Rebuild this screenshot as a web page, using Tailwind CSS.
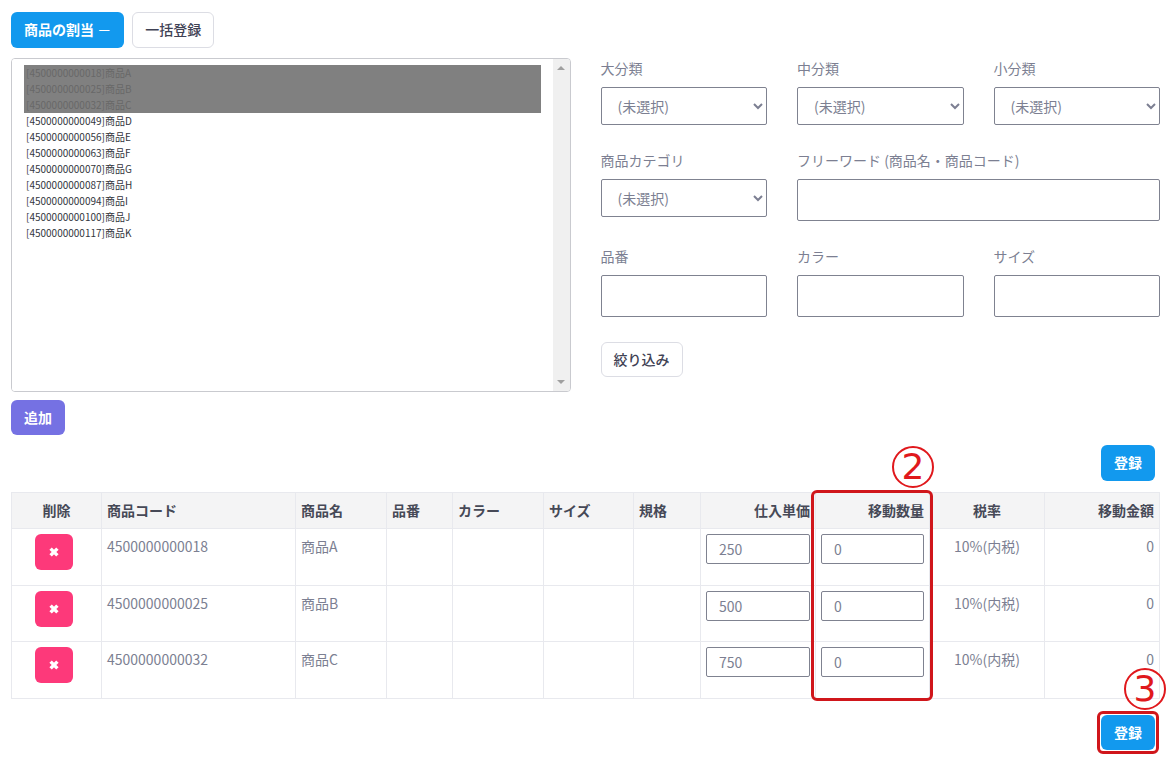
<!DOCTYPE html>
<html lang="ja">
<head>
<meta charset="utf-8">
<meta name="viewport" content="width=device-width, initial-scale=1">
<title>商品の割当</title>
<script src="https://cdn.jsdelivr.net/npm/@tailwindcss/browser@4"></script>
</head>
<body class="bg-white font-['Noto_Sans_CJK_JP',sans-serif] text-sm text-[#7c7f92]">
<main class="pt-3 pr-2 pb-2 pl-[11px]">
  <div class="flex gap-2">
    <button type="button" class="h-9 rounded-md bg-[#1299ee] px-[13px] pb-0.5 text-[14px] leading-5 font-bold text-white">商品の割当 <span class="font-normal">－</span></button>
    <button type="button" class="h-9 rounded-md border border-[#dcdde4] px-3 pb-0.5 text-[14px] leading-5 font-medium text-[#3f4254]">一括登録</button>
  </div>

  <div class="mt-2.5 grid grid-cols-2 gap-[30px]">
    <div>
      <div class="flex h-[334px] overflow-hidden rounded-[4px] border border-[#c9cacf]">
        <select multiple aria-label="商品一覧" class="h-full min-w-0 flex-1 overflow-hidden bg-white px-3 py-1.5 text-[10px] text-[#33363d]">
          <option disabled class="h-4 bg-[#808080] px-0.5 leading-4 text-[#686868]">[4500000000018]商品A</option>
          <option disabled class="h-4 bg-[#808080] px-0.5 leading-4 text-[#686868]">[4500000000025]商品B</option>
          <option disabled class="h-4 bg-[#808080] px-0.5 leading-4 text-[#686868]">[4500000000032]商品C</option>
          <option class="h-4 px-0.5 leading-4">[4500000000049]商品D</option>
          <option class="h-4 px-0.5 leading-4">[4500000000056]商品E</option>
          <option class="h-4 px-0.5 leading-4">[4500000000063]商品F</option>
          <option class="h-4 px-0.5 leading-4">[4500000000070]商品G</option>
          <option class="h-4 px-0.5 leading-4">[4500000000087]商品H</option>
          <option class="h-4 px-0.5 leading-4">[4500000000094]商品I</option>
          <option class="h-4 px-0.5 leading-4">[4500000000100]商品J</option>
          <option class="h-4 px-0.5 leading-4">[4500000000117]商品K</option>
        </select>
        <div aria-hidden="true" class="flex w-[17px] flex-col items-center justify-between bg-[#f0f0f0] py-[7px]">
          <svg class="h-1 w-2" viewBox="0 0 8 4"><path d="M0 4L4 0L8 4Z" fill="#a0a0a0"/></svg>
          <svg class="h-1 w-2" viewBox="0 0 8 4"><path d="M0 0L4 4L8 0Z" fill="#a0a0a0"/></svg>
        </div>
      </div>
      <button type="button" class="mt-2 h-[35px] rounded-md bg-[#7571e3] px-[13px] pb-0.5 text-[14px] leading-5 font-bold text-white">追加</button>
    </div>

    <form class="grid grid-cols-3 content-start gap-x-[30px] gap-y-[25px]">
      <div class="flex flex-col gap-2">
        <label for="large" class="leading-[21px]">大分類</label>
        <select id="large" class="h-[38px] rounded-[2px] border border-[#7f8290] bg-white pr-px pl-3"><option>(未選択)</option></select>
      </div>
      <div class="flex flex-col gap-2">
        <label for="middle" class="leading-[21px]">中分類</label>
        <select id="middle" class="h-[38px] rounded-[2px] border border-[#7f8290] bg-white pr-px pl-3"><option>(未選択)</option></select>
      </div>
      <div class="flex flex-col gap-2">
        <label for="small" class="leading-[21px]">小分類</label>
        <select id="small" class="h-[38px] rounded-[2px] border border-[#7f8290] bg-white pr-px pl-3"><option>(未選択)</option></select>
      </div>
      <div class="flex flex-col gap-2">
        <label for="category" class="leading-[21px]">商品カテゴリ</label>
        <select id="category" class="h-[38px] rounded-[2px] border border-[#7f8290] bg-white pr-px pl-3"><option>(未選択)</option></select>
      </div>
      <div class="col-span-2 flex flex-col gap-2">
        <label for="freeword" class="leading-[21px]">フリーワード (商品名・商品コード)</label>
        <input id="freeword" type="text" class="h-[42px] rounded-[2px] border border-[#7f8290] px-3">
      </div>
      <div class="flex flex-col gap-2">
        <label for="number" class="leading-[21px]">品番</label>
        <input id="number" type="text" class="h-[42px] w-full rounded-[2px] border border-[#7f8290] px-3">
      </div>
      <div class="flex flex-col gap-2">
        <label for="color" class="leading-[21px]">カラー</label>
        <input id="color" type="text" class="h-[42px] w-full rounded-[2px] border border-[#7f8290] px-3">
      </div>
      <div class="flex flex-col gap-2">
        <label for="size" class="leading-[21px]">サイズ</label>
        <input id="size" type="text" class="h-[42px] w-full rounded-[2px] border border-[#7f8290] px-3">
      </div>
      <div class="col-span-3">
        <button type="button" class="h-[35px] rounded-md border border-[#dcdde4] px-3 pb-0.5 text-[14px] leading-5 font-medium text-[#3f4254]">絞り込み</button>
      </div>
    </form>
  </div>

  <div class="mt-2.5 flex justify-end pr-[5px]">
    <button type="button" class="h-9 rounded-md bg-[#1299ee] px-[13px] pb-0.5 text-[14px] leading-5 font-bold text-white">登録</button>
  </div>

  <div class="relative mt-[11px] pr-px">
    <table class="w-full table-fixed border-collapse text-left [&_td]:border [&_td]:border-[#e8e9ee] [&_td]:px-[5px] [&_td]:align-top [&_th]:border [&_th]:border-[#e8e9ee] [&_th]:px-[5px] [&_th]:pb-0.5">
      <colgroup>
        <col class="w-[90px]"><col class="w-[194px]"><col class="w-[91px]"><col class="w-[66px]"><col class="w-[91px]"><col class="w-[90px]"><col class="w-[67px]"><col class="w-[115px]"><col class="w-[114px]"><col class="w-[115px]"><col class="w-[115px]">
      </colgroup>
      <thead class="bg-[#f4f4f5] text-[#464957]">
        <tr class="h-9">
          <th class="text-center">削除</th><th>商品コード</th><th>商品名</th><th>品番</th><th>カラー</th><th>サイズ</th><th>規格</th><th class="text-right">仕入単価</th><th class="text-right">移動数量</th><th class="text-center">税率</th><th class="text-right">移動金額</th>
        </tr>
      </thead>
      <tbody>
        <tr class="h-[57px]">
          <td class="pt-[5px] text-center"><button type="button" aria-label="削除" class="mr-[5px] inline-flex h-9 w-[38px] items-center justify-center rounded-md bg-[#fd397a] text-white"><svg class="size-3" viewBox="0 0 12 12"><path d="M2.6 2.6L9.4 9.4M9.4 2.6L2.6 9.4" stroke="currentColor" stroke-width="3.4"/></svg></button></td>
          <td class="pt-[7px]">4500000000018</td><td class="pt-[7px]">商品A</td><td></td><td></td><td></td><td></td>
          <td class="pt-[5px]"><input type="text" aria-label="仕入単価 商品A" value="250" class="block h-[30px] w-full rounded-[2px] border border-[#7f8290] px-3"></td>
          <td class="pt-[5px]"><input type="text" aria-label="移動数量 商品A" value="0" class="block h-[30px] w-full rounded-[2px] border border-[#7f8290] px-3"></td>
          <td class="pt-[7px] text-center">10%(内税)</td><td class="pt-[7px] text-right">0</td>
        </tr>
        <tr class="h-14">
          <td class="pt-[5px] text-center"><button type="button" aria-label="削除" class="mr-[5px] inline-flex h-9 w-[38px] items-center justify-center rounded-md bg-[#fd397a] text-white"><svg class="size-3" viewBox="0 0 12 12"><path d="M2.6 2.6L9.4 9.4M9.4 2.6L2.6 9.4" stroke="currentColor" stroke-width="3.4"/></svg></button></td>
          <td class="pt-[7px]">4500000000025</td><td class="pt-[7px]">商品B</td><td></td><td></td><td></td><td></td>
          <td class="pt-[5px]"><input type="text" aria-label="仕入単価 商品B" value="500" class="block h-[30px] w-full rounded-[2px] border border-[#7f8290] px-3"></td>
          <td class="pt-[5px]"><input type="text" aria-label="移動数量 商品B" value="0" class="block h-[30px] w-full rounded-[2px] border border-[#7f8290] px-3"></td>
          <td class="pt-[7px] text-center">10%(内税)</td><td class="pt-[7px] text-right">0</td>
        </tr>
        <tr class="h-[57px]">
          <td class="pt-[5px] text-center"><button type="button" aria-label="削除" class="mr-[5px] inline-flex h-9 w-[38px] items-center justify-center rounded-md bg-[#fd397a] text-white"><svg class="size-3" viewBox="0 0 12 12"><path d="M2.6 2.6L9.4 9.4M9.4 2.6L2.6 9.4" stroke="currentColor" stroke-width="3.4"/></svg></button></td>
          <td class="pt-[7px]">4500000000032</td><td class="pt-[7px]">商品C</td><td></td><td></td><td></td><td></td>
          <td class="pt-[5px]"><input type="text" aria-label="仕入単価 商品C" value="750" class="block h-[30px] w-full rounded-[2px] border border-[#7f8290] px-3"></td>
          <td class="pt-[5px]"><input type="text" aria-label="移動数量 商品C" value="0" class="block h-[30px] w-full rounded-[2px] border border-[#7f8290] px-3"></td>
          <td class="pt-[7px] text-center">10%(内税)</td><td class="pt-[7px] text-right">0</td>
        </tr>
      </tbody>
    </table>
    <div class="pointer-events-none absolute -top-0.5 right-[227px] -bottom-0.5 w-[122px] rounded-md border-3 border-[#d0161b]"></div>
    <div class="pointer-events-none absolute -top-[46px] right-[226px] flex size-[42px] items-center justify-center rounded-full border-2 border-[#e0181c] font-['DejaVu_Sans',sans-serif] text-[36px] leading-none text-[#e0181c]">2</div>
  </div>

  <div class="mt-4 flex justify-end pr-[5px]">
    <div class="relative">
      <button type="button" class="block h-[35px] rounded-md bg-[#1299ee] px-[13px] pb-0.5 text-[14px] leading-5 font-bold text-white">登録</button>
      <div class="pointer-events-none absolute -inset-1 rounded-md border-3 border-[#d0161b]"></div>
      <div class="pointer-events-none absolute -top-[47px] -right-[11px] flex size-[42px] items-center justify-center rounded-full border-2 border-[#e0181c] font-['DejaVu_Sans',sans-serif] text-[36px] leading-none text-[#e0181c]">3</div>
    </div>
  </div>
</main>
</body>
</html>
